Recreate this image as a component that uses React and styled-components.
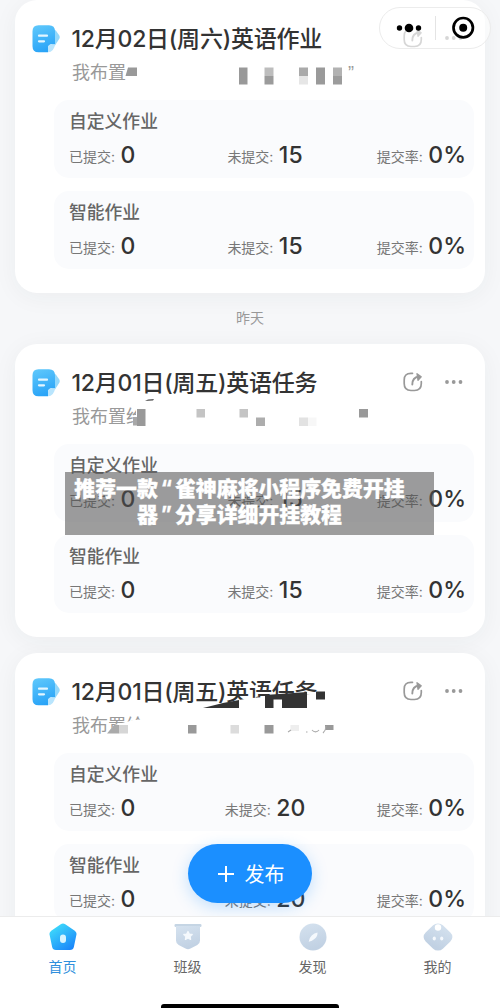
import styled, { createGlobalStyle } from 'styled-components';

const cards = [
  {
    id: 'sat',
    title: '12月02日(周六)英语作业',
    note: '我布置',
    missing: 15,
    mosaic: 'first',
  },
  {
    id: 'fri-a',
    title: '12月01日(周五)英语任务',
    note: '我布置给',
    missing: 15,
    mosaic: 'second',
  },
  {
    id: 'fri-b',
    title: '12月01日(周五)英语任务',
    note: '我布置给',
    missing: 20,
    mosaic: 'third',
  },
];

// [x, y, width, height, colour], measured from the card corner
const mosaics = {
  first: {
    shapes: [
      ['113,67.5 122,67.5 122,76 110.5,76', '#999999'],
    ],
    blocks: [
      [224, 67.5, 8.5, 17, '#999999'],
      [249.5, 67.5, 9, 8.5, '#bdbdbd'],
      [249.5, 76, 9, 8.5, '#9b9b9b'],
      [284, 67.5, 9, 8.5, '#aaaaaa'],
      [284, 76, 9, 8.5, '#e6e6e6'],
      [301, 67.5, 9, 17, '#9a9a9a'],
      [318, 67.5, 9, 8.5, '#b2b2b2'],
      [318, 76, 9, 8.5, '#9c9c9c'],
    ],
  },
  second: {
    shapes: [['130,57 133,55.5 139,55 138,56.5', '#555555']],
    blocks: [
      [121, 60, 20, 26, '#ffffff'],
      [118, 73, 4, 8.5, '#a8a8a8'],
      [122, 65, 8.5, 17, '#999999'],
      [181.5, 65, 8.5, 8.5, '#c4c4c4'],
      [224.5, 65, 8.5, 8.5, '#c4c4c4'],
      [241, 73.5, 9, 8.5, '#adadad'],
      [284, 73.5, 9, 8.5, '#e2e2e2'],
      [293, 73.5, 8.5, 8.5, '#f7f7f7'],
      [344, 65, 9, 8.5, '#999999'],
    ],
  },
  third: {
    shapes: [
      ['92,80.5 99,72 119,67 134,66 134,86 92,86', '#ffffff'],
      ['92,80.5 99,72 104.5,72 104.5,80.5', '#aaaaaa'],
      ['188,55 224,47 236,45 310,40 310,56 188,56', '#ffffff'],
      ['188,55 208,50 224,47 224,55', '#333333'],
      ['250,42 292,39 292,55 267,55 267,46.5 258.5,46.5 258.5,55 250,55', '#333333'],
    ],
    blocks: [
      [104.5, 72, 8.5, 8.5, '#d6d6d6'],
      [173, 72, 8.5, 8.5, '#999999'],
      [215.5, 72, 8.5, 8.5, '#dcdcdc'],
      [249.5, 72, 9, 8.5, '#999999'],
      [275.5, 72, 8.5, 6, '#eeeeee'],
      [301, 38.5, 9, 8, '#333333'],
      [310, 72, 8.5, 5, '#999999'],
    ],
  },
};

const Mosaic = ({ kind }) => (
  <MosaicLayer viewBox="0 0 400 95">
    {mosaics[kind].shapes.map(([points, fill]) => (
      <polygon key={points} points={points} fill={fill} />
    ))}
    {mosaics[kind].blocks.map(([x, y, w, h, fill]) => (
      <rect key={`${x}-${y}`} x={x} y={y} width={w} height={h} fill={fill} />
    ))}
    {kind === 'third' && (
      <g fill="none" stroke="#aaaaaa" strokeWidth="1.1">
        <path d="M273 79l3-2M291 79h1.5M297 77c2 2.500 5 2.500 7 0M308 80c2-2 3-5 3-7" />
      </g>
    )}
  </MosaicLayer>
);

const NoteIcon = () => (
  <svg width="28" height="28" viewBox="0 0 28 28">
    <defs>
      <linearGradient id="note" x1="0.3" y1="0" x2="0.6" y2="1">
        <stop offset="0" stopColor="#5cc6fb" />
        <stop offset="1" stopColor="#27a2f7" />
      </linearGradient>
    </defs>
    <path d="M21 4.500q2 0 3 1.300l3 4.200q1.300 2 .3 3.700L23 20.500h-3z" fill="#93d8fb" />
    <path
      d="M6.500 0.300h10.500q6 0 6 6v13h-3q-4 0-4 4v4h-9.500q-6 0-6-6v-15q0-6 6-6z"
      fill="url(#note)"
    />
    <path d="M16 27.300v-4q0-4 4-4h3q0 3.300-2.200 5.700-2 2.300-4.800 2.300z" fill="#b9e5fd" />
    <path d="M7 10.700h8M7 16.300h5" stroke="#e3f6ff" strokeWidth="2.200" strokeLinecap="round" />
  </svg>
);

const ShareIcon = () => (
  <svg width="20" height="20" viewBox="0 0 20 20" fill="none" stroke="#999999">
    <path
      d="M9.500 1.300H8Q1.200 1.300 1.200 8v3.500Q1.200 18.500 8 18.500h3.500q6.800 0 6.800-7V9.500"
      strokeWidth="1.700"
      strokeLinecap="round"
    />
    <path d="M9.300 12.500q0-7 6.500-8" strokeWidth="1.900" strokeLinecap="round" />
    <path d="M14 1.700l4.200 3-3.200 3.500z" strokeWidth="1.300" fill="#999999" strokeLinejoin="round" />
  </svg>
);

const MoreIcon = () => (
  <svg width="18" height="4" viewBox="0 0 18 4" fill="#999999">
    <circle cx="2" cy="2" r="1.900" />
    <circle cx="8.700" cy="2" r="1.900" />
    <circle cx="15.500" cy="2" r="1.900" />
  </svg>
);

const Summary = ({ name, missing }) => (
  <SummaryBox>
    <SummaryName>{name}</SummaryName>
    <Stats>
      <Stat>
        已提交: <Value>0</Value>
      </Stat>
      <Stat>
        未提交: <Value>{missing}</Value>
      </Stat>
      <Stat>
        提交率: <Value>0%</Value>
      </Stat>
    </Stats>
  </SummaryBox>
);

const HomeworkCard = ({ card }) => (
  <Card>
    <CardHead>
      <NoteIcon />
      <CardTitle>{card.title}</CardTitle>
      <Actions>
        <ShareIcon />
        <MoreIcon />
      </Actions>
    </CardHead>
    <CardNote>{card.note}</CardNote>
    <Mosaic kind={card.mosaic} />
    {card.mosaic === 'first' && <ClosingQuote>”</ClosingQuote>}
    <Summary name="自定义作业" missing={card.missing} />
    <Summary name="智能作业" missing={card.missing} />
  </Card>
);

const HomeIcon = () => (
  <svg width="30" height="28" viewBox="0 0 30 28">
    <defs>
      <linearGradient id="home" gradientUnits="userSpaceOnUse" x1="5" y1="3" x2="22" y2="27">
        <stop offset="0" stopColor="#3fdcfb" />
        <stop offset="1" stopColor="#1a86fa" />
      </linearGradient>
    </defs>
    <path
      d="M15 4.500l9.500 6.500-2.500 12H8l-2.500-12z"
      fill="url(#home)"
      stroke="url(#home)"
      strokeWidth="8"
      strokeLinejoin="round"
    />
    <rect x="12" y="11.500" width="6" height="8.500" rx="3" fill="#d5f3ff" />
  </svg>
);

const ClassIcon = () => (
  <svg width="30" height="28" viewBox="0 0 30 28">
    <rect x="1.500" y="1" width="27" height="3" rx="1.300" fill="#c5d5e4" />
    <path d="M3 3h24v14.500q0 3-2.700 4.500l-6.800 3.600q-2.500 1.200-5 0L5.700 22Q3 20.500 3 17.500z" fill="url(#pale)" />
    <path
      d="M15 8.500l1.300 2.600 2.900.4-2.100 2 .5 2.900-2.600-1.400-2.600 1.400.5-2.900-2.100-2 2.900-.4z"
      fill="#f5f9fd"
      stroke="#f5f9fd"
      strokeWidth="1.300"
      strokeLinejoin="round"
    />
  </svg>
);

const FindIcon = () => (
  <svg width="30" height="28" viewBox="0 0 30 28">
    <circle cx="15" cy="14" r="13.500" fill="url(#pale)" />
    <path d="M19.500 9.500q.3 3.700-2.800 6.300-2.500 2.300-6 2.900.3-3.800 3-6.300 2.500-2.400 5.800-2.900z" fill="#f5f9fd" />
  </svg>
);

const MineIcon = () => (
  <svg width="30" height="28" viewBox="0 0 30 28">
    <defs>
      <linearGradient id="pale" x1="0" y1="0" x2="0.3" y2="1">
        <stop offset="0" stopColor="#d5e2ef" />
        <stop offset="1" stopColor="#c1d1e3" />
      </linearGradient>
    </defs>
    <rect
      x="-11.500"
      y="-11.500"
      width="23"
      height="23"
      rx="6.500"
      fill="url(#pale)"
      transform="translate(15 14) scale(1.060 1) rotate(45)"
    />
    <circle cx="15" cy="4.500" r="3.200" fill="#ffffff" />
    <ellipse cx="11.300" cy="15.500" rx="1.600" ry="2.100" fill="#f5f9fd" />
    <ellipse cx="18.700" cy="15.500" rx="1.600" ry="2.100" fill="#f5f9fd" />
  </svg>
);

const tabs = [
  { label: '首页', Icon: HomeIcon, active: true },
  { label: '班级', Icon: ClassIcon },
  { label: '发现', Icon: FindIcon },
  { label: '我的', Icon: MineIcon },
];

const App = () => (
  <Screen>
    <GlobalStyle />
    <Feed>
      <HomeworkCard card={cards[0]} />
      <DayLabel>昨天</DayLabel>
      <HomeworkCard card={cards[1]} />
      <HomeworkCard card={cards[2]} />
    </Feed>
    <Capsule>
      <svg width="111" height="41" viewBox="0 0 111 41">
        <circle cx="19.500" cy="20" r="2.700" />
        <circle cx="29" cy="20" r="4.300" />
        <circle cx="38.500" cy="20" r="2.700" />
        <path d="M55.500 8v24" stroke="#e4e4e4" />
        <circle cx="83.200" cy="19.700" r="9.700" fill="none" stroke="#000000" strokeWidth="2.700" />
        <circle cx="83.200" cy="19.700" r="4" />
      </svg>
    </Capsule>
    <Banner>
      推荐一款<BannerQuote>“</BannerQuote>雀神麻将小程序免费开挂
      <br />
      器<BannerQuote>”</BannerQuote>分享详细开挂教程
    </Banner>
    <PublishButton>
      <svg width="16" height="16" viewBox="0 0 16 16" stroke="#ffffff" strokeWidth="2">
        <path d="M8 0v16M0 8h16" />
      </svg>
      发布
    </PublishButton>
    <TabBar>
      {tabs.map(({ label, Icon, active }) => (
        <Tab key={label} $active={active}>
          <Icon />
          {label}
        </Tab>
      ))}
      <HomeIndicator />
    </TabBar>
  </Screen>
);

export default App;

const GlobalStyle = createGlobalStyle`
  body {
    margin: 0;
    font-family: Inter, 'Noto Sans CJK SC', sans-serif;
  }
  svg {
    display: block;
    flex: none;
  }
`;

const Screen = styled.div`
  position: relative;
  display: flex;
  flex-direction: column;
  width: 500px;
  height: 1008px;
  overflow: hidden;
  background: #f6f7f9;
`;

const Feed = styled.main`
  flex: 1;
  min-height: 0;
  padding: 0 15px;
  overflow: hidden;
`;

const Card = styled.section`
  position: relative;
  box-sizing: border-box;
  height: 293px;
  padding: 24px 11px 24px 39px;
  border-radius: 22px;
  background: #ffffff;
  box-shadow: 0 4px 24px rgba(40, 50, 60, 0.05);

  & + & {
    margin-top: 16px;
  }
`;

const CardHead = styled.header`
  display: flex;
  align-items: center;
  height: 30px;
  margin-left: -22px;
`;

const CardTitle = styled.h2`
  margin: 0 0 0 11.5px;
  color: #333333;
  font-size: 23px;
  font-weight: 500;
  letter-spacing: -0.23px;
  line-height: 30px;
  white-space: nowrap;
`;

const Actions = styled.div`
  display: flex;
  align-items: center;
  gap: 22.5px;
  margin: 0 0 2px auto;
  padding-right: 11px;
`;

const CardNote = styled.p`
  height: 26px;
  margin: 6px 0 14px 18px;
  color: #999999;
  font-size: 18px;
  line-height: 26px;
`;

const MosaicLayer = styled.svg`
  position: absolute;
  top: 0;
  left: 0;
  width: 400px;
  height: 95px;
`;

const ClosingQuote = styled.span`
  position: absolute;
  top: 62px;
  left: 333px;
  color: #999999;
  font-family: 'Liberation Sans', sans-serif;
  font-size: 18px;
  line-height: 22px;
`;

const SummaryBox = styled.div`
  box-sizing: border-box;
  height: 78px;
  padding: 9px 8px 0 15px;
  border-radius: 15px;
  background: #fafbfd;

  & + & {
    margin-top: 13px;
  }
`;

const SummaryName = styled.h3`
  margin: 0;
  color: #666666;
  font-size: 17.8px;
  font-weight: 500;
  line-height: 26px;
`;

const Stats = styled.div`
  display: grid;
  grid-template-columns: 1fr auto 1fr;
  height: 32px;
  margin-top: 6px;
`;

const Stat = styled.span`
  color: #777777;
  font-size: 14px;
  line-height: 32px;
  white-space: nowrap;

  &:nth-child(2) {
    padding-right: 5px;
  }
  &:last-child {
    justify-self: end;
  }
`;

const Value = styled.b`
  margin-left: 1.5px;
  color: #333333;
  font-size: 23px;
  font-weight: 500;
  line-height: 28px;
  vertical-align: -1px;
`;

const DayLabel = styled.div`
  height: 51px;
  color: #999999;
  font-size: 14px;
  line-height: 50px;
  text-align: center;
`;

const Capsule = styled.div`
  position: absolute;
  top: 7px;
  left: 379px;
  box-sizing: border-box;
  width: 112px;
  height: 42px;
  border: 1px solid #ececec;
  border-radius: 21px;
  background: rgba(255, 255, 255, 0.6);
`;

const Banner = styled.div`
  position: absolute;
  top: 472px;
  left: 65px;
  box-sizing: border-box;
  width: 369px;
  height: 63px;
  padding: 2px 20px 0 0;
  background: rgba(80, 80, 80, 0.56);
  color: #ffffff;
  font-family: 'Noto Sans CJK SC', sans-serif;
  font-size: 20.9px;
  font-weight: 900;
  line-height: 26px;
  text-align: center;
  white-space: nowrap;
  -webkit-text-stroke: 0.3px #ffffff;
`;

const BannerQuote = styled.span`
  display: inline-block;
  width: 17px;
  font-family: Inter, sans-serif;
  font-weight: 700;
  line-height: 18px;
`;

const PublishButton = styled.button`
  position: absolute;
  top: 844px;
  left: 188px;
  display: flex;
  align-items: center;
  justify-content: center;
  gap: 11px;
  width: 124px;
  height: 59px;
  padding: 0 0 0 2px;
  border: none;
  border-radius: 30px;
  background: #1b8fff;
  box-shadow: 0 4px 16px rgba(27, 143, 255, 0.25);
  color: #ffffff;
  font-family: inherit;
  font-size: 20px;
`;

const TabBar = styled.nav`
  position: relative;
  display: flex;
  box-sizing: border-box;
  height: 92px;
  padding-top: 6px;
  border-top: 1px solid #ececec;
  background: #ffffff;
`;

const Tab = styled.div`
  display: flex;
  flex: 1;
  flex-direction: column;
  align-items: center;
  gap: 6px;
  color: ${(props) => (props.$active ? '#2f8fdc' : '#666666')};
  font-size: 14px;
  line-height: 20px;
`;

const HomeIndicator = styled.div`
  position: absolute;
  bottom: 0;
  left: 161px;
  width: 178px;
  height: 4px;
  border-radius: 3px 3px 0 0;
  background: #000000;
`;
